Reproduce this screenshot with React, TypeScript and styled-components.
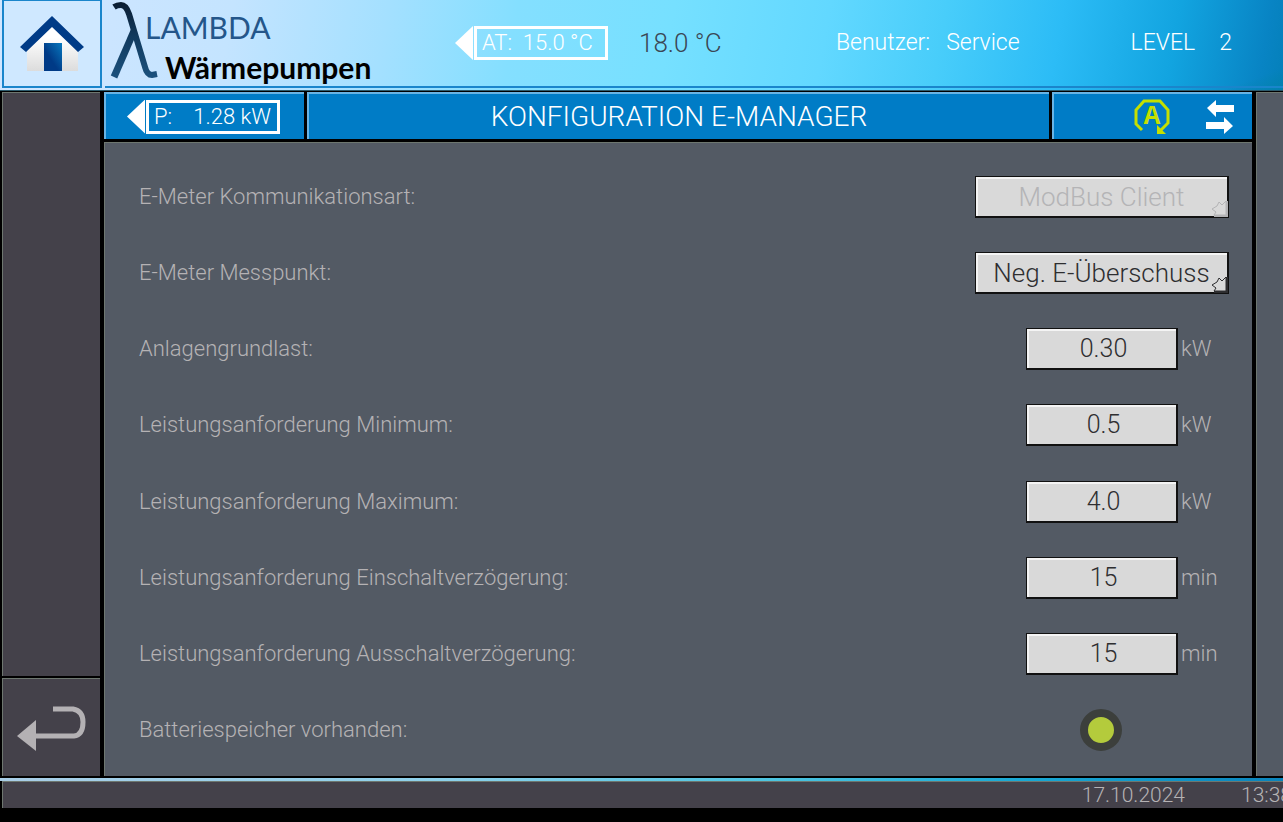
import React from "react";
import styled, { createGlobalStyle } from "styled-components";

const GlobalStyle = createGlobalStyle`
  *, *::before, *::after { box-sizing: border-box; }
  body { margin: 0; background: #000; }
  button, input, select { font: inherit; margin: 0; border-radius: 0; }
`;

const edge = "#6e7770";
const muted = "#b5b2b4";

const Screen = styled.div`
  display: flex;
  flex-direction: column;
  min-height: 100vh;
  padding: 0 0 14px 2px;
  overflow: hidden;
  background: #000;
  color: ${muted};
  font-family: Roboto, "Liberation Sans", sans-serif;
  font-weight: 300;
  font-size: 22px;
  line-height: 26px;
`;

const Header = styled.header`
  display: flex;
  height: 91px;
  margin-left: -2px;
  padding: 0 0 2px 2px;
  border-bottom: 1px solid #2c5a6c;
  background:
    linear-gradient(160deg, rgba(0, 130, 160, 0) 96%, rgba(0, 130, 160, 0.5) 100%),
    linear-gradient(100deg, #d2e6ff 0%, #c4e4ff 18%, #a4e0ff 30%, #84dfff 40%, #76e0ff 52%, #62d8ff 64%, #48cdfa 73%, #2cbcf6 82%, #12a4e0 91%, #0884c4 98%, #0480ba 100%);
`;

const HomeButton = styled.button`
  display: grid;
  place-items: center;
  flex: none;
  width: 100px;
  padding: 0;
  border: 2px solid #1a85cb;
  border-top-width: 1px;
  background: #cfe8ff;
`;

const HeaderBar = styled.div`
  display: flex;
  flex: 1;
  align-items: center;
  min-width: 0;
  margin-left: 3px;
  padding-right: 51px;
  border-bottom: 2px solid #1a85cb;
  color: #fff;
`;

const Brand = styled.div`
  display: flex;
  flex: none;
  align-self: flex-start;
  width: 350px;
  padding: 1px 0 0 4px;
  font-family: Lato, sans-serif;
`;

const BrandName = styled.div`
  display: flex;
  flex-direction: column;
  margin-left: -14px;
  padding-top: 8px;
`;

const BrandTop = styled.span`
  color: #24568a;
  font-size: 30px;
  font-weight: 400;
  line-height: 36px;
`;

const BrandBottom = styled.span`
  padding-left: 20px;
  color: #000;
  font-size: 30px;
  font-weight: 700;
  line-height: 44px;
`;

const Tag = styled.div<{ $width: number }>`
  display: flex;
  align-items: center;
  flex: none;
  &::before {
    content: "";
    width: 18px;
    height: 34px;
    margin-right: 1px;
    background: #fff;
    clip-path: polygon(0 50%, 100% 0, 100% 100%);
  }
  > span {
    display: flex;
    justify-content: space-between;
    width: ${(p) => p.$width}px;
    height: 34px;
    padding: 0 6px 0 5px;
    border: 3px solid #fff;
    color: #fff;
    line-height: 28px;
    white-space: pre;
  }
`;

const Outdoor = styled.span`
  margin-left: 31px;
  color: #3b4654;
  font-size: 26px;
`;

const HeaderPair = styled.div<{ $gap: number }>`
  display: flex;
  gap: ${(p) => p.$gap}px;
  font-size: 23px;
  white-space: nowrap;
`;

const HeaderInfo = styled.div`
  display: flex;
  gap: 111px;
  margin-left: auto;
`;

const Middle = styled.div`
  display: grid;
  flex: 1;
  grid-template-columns: 98px minmax(0, 1fr) 27px;
  column-gap: 4px;
  padding: 1px 0 2px;
`;

const Side = styled.nav`
  display: flex;
  flex-direction: column;
  gap: 2px;
`;

const SideBlank = styled.div`
  flex: 1;
  border: solid ${edge};
  border-width: 1px 0 0 1px;
  background: #44414a;
`;

const BackButton = styled.button`
  display: grid;
  place-items: center;
  height: 98px;
  padding: 3px 0 0;
  border: solid ${edge};
  border-width: 1px 0 0 1px;
  background: #44414a;
`;

const Centre = styled.main`
  display: flex;
  flex-direction: column;
  gap: 3px;
`;

const TitleBar = styled.div`
  display: grid;
  grid-template-columns: 200px minmax(0, 1fr) 200px;
  gap: 3px;
  height: 47px;
`;

const TitleCell = styled.div`
  display: flex;
  align-items: center;
  border: solid #68b4e4;
  border-width: 2px 0 0 2px;
  background: #007cc6;
  color: #fff;
`;

const PowerCell = styled(TitleCell)`
  padding-left: 21px;
`;

const IconCell = styled(TitleCell)`
  justify-content: flex-end;
  gap: 36px;
  padding-right: 18px;
`;

const Title = styled.h1`
  flex: 1;
  margin: 0;
  font-size: 28px;
  font-weight: 300;
  line-height: 32px;
  text-align: center;
`;

const Panel = styled.form`
  display: flex;
  flex: 1;
  flex-direction: column;
  padding: 16px 23px 8px 34px;
  border: solid ${edge};
  border-width: 1px 0 0 1px;
  background: #535a64;
`;

const Strip = styled.div`
  border: solid ${edge};
  border-width: 1px 0 0 1px;
  background: #535a64;
`;

const Row = styled.div`
  display: flex;
  flex: 1;
  align-items: center;
  justify-content: space-between;
  min-height: 44px;
`;

const SelectBox = styled.div<{ $disabled?: boolean }>`
  position: relative;
  width: 254px;
  color: ${(p) => (p.$disabled ? "#b4b4b6" : "#2e2e30")};
  > svg {
    position: absolute;
    right: 1px;
    bottom: 1px;
    pointer-events: none;
  }
`;

const Select = styled.select`
  appearance: none;
  display: block;
  width: 100%;
  height: 42px;
  padding: 0;
  border: solid #111;
  border-width: 1px 2px 2px 1px;
  box-shadow: inset 2px 2px 0 #f4f4f4;
  background: #d9d9d9;
  color: inherit;
  font-size: 26px;
  line-height: 36px;
  opacity: 1;
  text-align: center;
  text-align-last: center;
`;

const Value = styled.span`
  display: flex;
  align-items: center;
  gap: 3px;
  width: 203px;
`;

const NumberBox = styled.input`
  width: 152px;
  height: 42px;
  padding: 0 0 0 4px;
  border: solid #111;
  border-width: 1px 2px 2px 1px;
  box-shadow: inset 2px 2px 0 #f4f4f4;
  background: #d9d9d9;
  color: #2e2e30;
  font-size: 25px;
  text-align: center;
`;

const Lamp = styled.input`
  appearance: none;
  width: 42px;
  height: 42px;
  margin: 0 0 0 54px;
  border: 8px solid #3c3f3c;
  border-radius: 50%;
  background: #3c3f3c;
  &:checked { background: #b4cb3c; }
`;

const Rule = styled.div`
  height: 3px;
  margin-left: -2px;
  background: linear-gradient(90deg, #a9cde6 0%, #8cd0ea 35%, #4cc4e0 60%, #18a8d4 80%, #0a84bc 100%);
`;

const Footer = styled.footer`
  display: flex;
  justify-content: flex-end;
  gap: 56px;
  height: 27px;
  border: solid ${edge};
  border-width: 1px 0 0 1px;
  background: #44414a;
  font-size: 21px;
  white-space: nowrap;
`;

const Clock = styled.time`
  width: 42px;
`;

function HomeIcon() {
  return (
    <svg width="64" height="56" viewBox="0 0 64 56" aria-hidden="true">
      <defs>
        <linearGradient id="wall" x1="0" y1="0" x2="0" y2="1">
          <stop offset="0.3" stopColor="#fff" />
          <stop offset="1" stopColor="#dcdcdc" />
        </linearGradient>
        <linearGradient id="door" x1="1" y1="0" x2="0" y2="1">
          <stop offset="0" stopColor="#0878be" />
          <stop offset="0.6" stopColor="#003a86" />
        </linearGradient>
      </defs>
      <path d="M7 31 32 7l26 24v24H7z" fill="url(#wall)" />
      <path d="M32 0 64 31l-6 5L32 11 6 36l-6-5z" fill="#003b87" />
      <path d="M24 27h18v28H24z" fill="url(#door)" />
    </svg>
  );
}

function LambdaMark() {
  return (
    <svg width="50" height="78" viewBox="0 0 50 78" aria-hidden="true">
      <defs>
        <linearGradient id="lam" gradientUnits="userSpaceOnUse" x1="0" y1="0" x2="0" y2="78">
          <stop offset="0" stopColor="#0b1c30" />
          <stop offset="0.45" stopColor="#113a5e" />
          <stop offset="1" stopColor="#1c527e" />
        </linearGradient>
      </defs>
      <g fill="none" stroke="url(#lam)">
        <path d="M5 6Q8 4 12 4Q17 4 20 13L36 66Q38 74 43 74L48 73" strokeWidth="6" />
        <path d="M25 30L5 76" strokeWidth="7" />
      </g>
    </svg>
  );
}

function AutoIcon() {
  return (
    <svg width="36" height="36" viewBox="0 0 36 36" aria-hidden="true">
      <path d="M8 31 2 25V11L10 2H26L34 11V24L27 31" fill="none" stroke="#c4e000" strokeWidth="3" />
      <path d="M23 26v9h9z" fill="#c4e000" />
      <text x="18" y="25" textAnchor="middle" fontFamily="Liberation Mono" fontWeight="700" fontSize="28" fill="#c4e000">A</text>
    </svg>
  );
}

function SwapIcon() {
  return (
    <svg width="28" height="34" viewBox="0 0 28 34" aria-hidden="true" fill="#fff">
      <path d="M1 8 10 0v5h18v7H10v5z" />
      <path d="M27 26 18 17v5H0v7h18v5z" />
    </svg>
  );
}

function BackIcon() {
  return (
    <svg width="69" height="46" viewBox="0 0 69 46" aria-hidden="true">
      <path d="M36 3H56Q66 5 66 16Q66 29 57 30H17" fill="none" stroke="#b4b1b4" strokeWidth="5" />
      <path d="M0 30 19 14V45z" fill="#b4b1b4" />
    </svg>
  );
}

function CornerIcon() {
  return (
    <svg width="17" height="17" viewBox="0 0 17 17" aria-hidden="true">
      <path d="M15 1 11 5 8 2 6 6 1 9 5 12 3 15H15z" fill="#d9d9d9" stroke="currentColor" />
      <path d="M3 16H16V1" fill="none" stroke="currentColor" strokeWidth="2" />
    </svg>
  );
}

function Choice({ id, label, value, disabled }: { id: string; label: string; value: string; disabled?: boolean }) {
  return (
    <Row>
      <label htmlFor={id}>{label}</label>
      <SelectBox $disabled={disabled}>
        <Select id={id} disabled={disabled} defaultValue={value}>
          <option>{value}</option>
        </Select>
        <CornerIcon />
      </SelectBox>
    </Row>
  );
}

const numbers = [
  { id: "base", label: "Anlagengrundlast:", value: "0.30", unit: "kW" },
  { id: "min", label: "Leistungsanforderung Minimum:", value: "0.5", unit: "kW" },
  { id: "max", label: "Leistungsanforderung Maximum:", value: "4.0", unit: "kW" },
  { id: "on", label: "Leistungsanforderung Einschaltverzögerung:", value: "15", unit: "min" },
  { id: "off", label: "Leistungsanforderung Ausschaltverzögerung:", value: "15", unit: "min" },
];

export default function App() {
  return (
    <Screen>
      <GlobalStyle />
      <Header>
        <HomeButton type="button" aria-label="Home"><HomeIcon /></HomeButton>
        <HeaderBar>
          <Brand>
            <LambdaMark />
            <BrandName>
              <BrandTop>LAMBDA</BrandTop>
              <BrandBottom>Wärmepumpen</BrandBottom>
            </BrandName>
          </Brand>
          <Tag $width={134}><span>AT:  15.0 °C</span></Tag>
          <Outdoor>18.0 °C</Outdoor>
          <HeaderInfo>
            <HeaderPair $gap={16}><span>Benutzer:</span><span>Service</span></HeaderPair>
            <HeaderPair $gap={24}><span>LEVEL</span><span>2</span></HeaderPair>
          </HeaderInfo>
        </HeaderBar>
      </Header>
      <Middle>
        <Side>
          <SideBlank />
          <BackButton type="button" aria-label="Zurück"><BackIcon /></BackButton>
        </Side>
        <Centre>
          <TitleBar>
            <PowerCell>
              <Tag $width={134}><span><span>P:</span><span>1.28 kW</span></span></Tag>
            </PowerCell>
            <TitleCell><Title>KONFIGURATION E-MANAGER</Title></TitleCell>
            <IconCell><AutoIcon /><SwapIcon /></IconCell>
          </TitleBar>
          <Panel>
            <Choice id="comm" label="E-Meter Kommunikationsart:" value="ModBus Client" disabled />
            <Choice id="point" label="E-Meter Messpunkt:" value="Neg. E-Überschuss" />
            {numbers.map((n) => (
              <Row key={n.id}>
                <label htmlFor={n.id}>{n.label}</label>
                <Value>
                  <NumberBox id={n.id} type="text" inputMode="decimal" defaultValue={n.value} />
                  <span>{n.unit}</span>
                </Value>
              </Row>
            ))}
            <Row>
              <label htmlFor="battery">Batteriespeicher vorhanden:</label>
              <Value><Lamp id="battery" type="checkbox" defaultChecked /></Value>
            </Row>
          </Panel>
        </Centre>
        <Strip />
      </Middle>
      <Rule />
      <Footer>
        <time>17.10.2024</time>
        <Clock>13:38</Clock>
      </Footer>
    </Screen>
  );
}
